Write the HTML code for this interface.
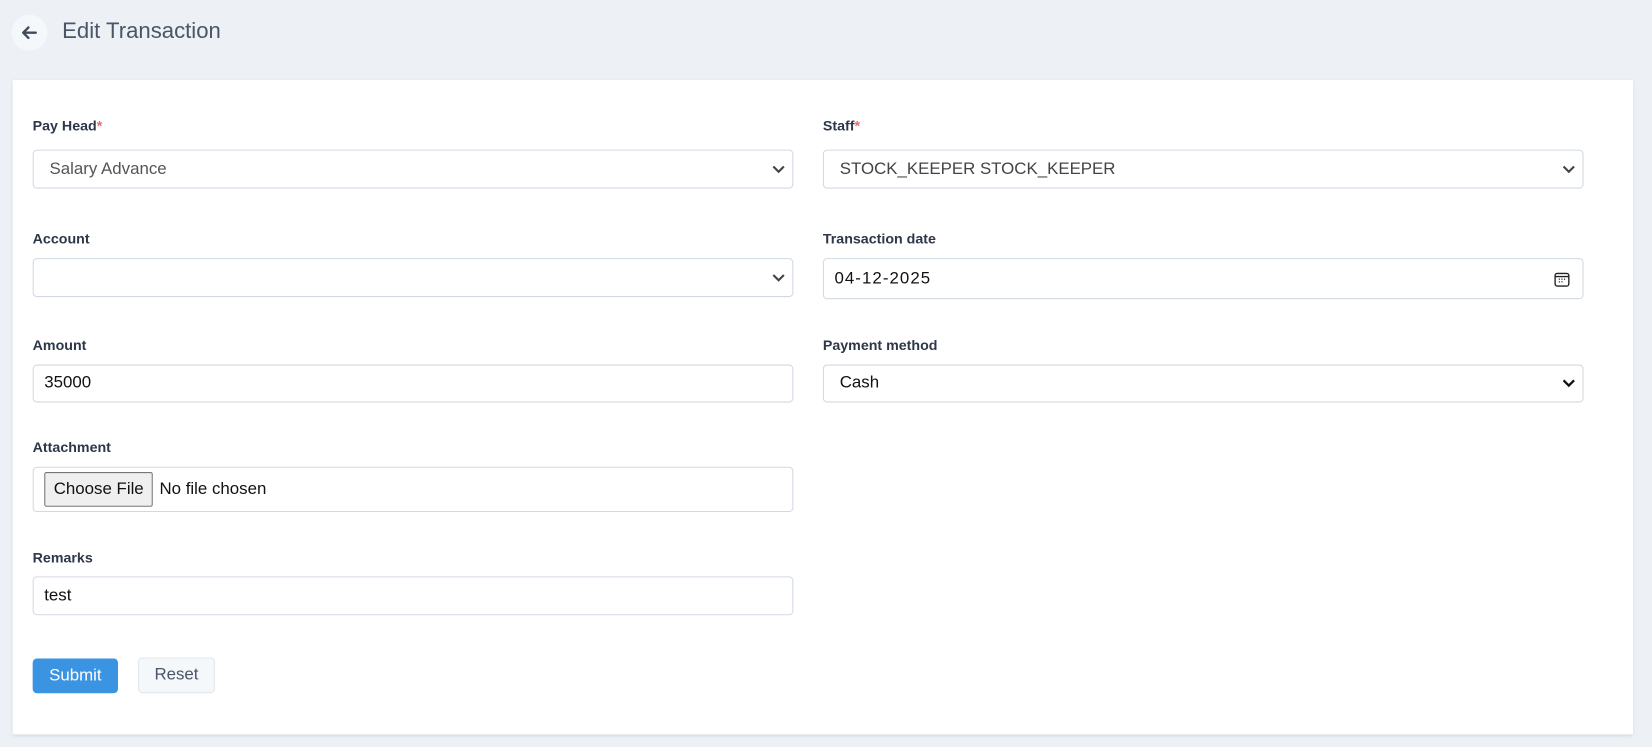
<!DOCTYPE html>
<html><head><meta charset="utf-8"><style>
*{box-sizing:border-box;margin:0;padding:0}
body{width:1652px;height:747px;background:#edf1f6;font-family:"Liberation Sans",sans-serif;position:relative;overflow:hidden}
#w{position:absolute;left:0;top:0;width:1568px;height:709px;transform:scale(1.0536);transform-origin:0 0}
.a{position:absolute}
.card{left:12px;top:76px;width:1538px;height:621px;background:#fff;box-shadow:0 1px 3px rgba(0,0,0,.12)}
.lbl{font-size:13.5px;font-weight:bold;color:#2d3748}
.lbl span{color:#f56565}
.f{border:1px solid #d2d9e3;border-radius:4px;background:#fff;font-size:16px;color:#111;padding-left:10px;display:flex;align-items:center}
.chev{position:absolute;right:6px;top:50%;margin-top:-5px}
</style></head><body><div id="w">
<div class="a" style="left:11px;top:14px;width:34px;height:34px;border-radius:50%;background:#f5f8fb"></div>
<svg class="a" style="left:19px;top:22px" width="18" height="18" viewBox="0 0 18 18"><path d="M15 9H3M8 4L3 9l5 5" stroke="#3f4a5a" stroke-width="2.2" fill="none" stroke-linecap="round" stroke-linejoin="round"/></svg>
<div class="a" style="left:59px;top:18px;font-size:21px;color:#4a5568">Edit Transaction</div>
<div class="a card"></div>

<div class="a lbl" style="left:31px;top:112px">Pay Head<span>*</span></div>
<div class="a f" style="left:31px;top:142px;width:722px;height:37px;color:#555;padding-left:15px">Salary Advance<svg class="chev" width="14" height="10"><path d="M2 2l5 5 5-5" stroke="#444" stroke-width="2" fill="none"/></svg></div>
<div class="a lbl" style="left:781px;top:112px">Staff<span>*</span></div>
<div class="a f" style="left:781px;top:142px;width:722px;height:37px;color:#444;padding-left:15px">STOCK_KEEPER STOCK_KEEPER<svg class="chev" width="14" height="10"><path d="M2 2l5 5 5-5" stroke="#444" stroke-width="2" fill="none"/></svg></div>

<div class="a lbl" style="left:31px;top:219px">Account</div>
<div class="a f" style="left:31px;top:245px;width:722px;height:37px"><svg class="chev" width="14" height="10"><path d="M2 2l5 5 5-5" stroke="#444" stroke-width="2" fill="none"/></svg></div>
<div class="a lbl" style="left:781px;top:219px">Transaction date</div>
<div class="a f" style="left:781px;top:245px;width:722px;height:39px;letter-spacing:1px">04-12-2025<svg class="a" style="right:12px;top:12px" width="15" height="15" viewBox="0 0 15 15"><rect x="1" y="1.5" width="13" height="12" rx="2" stroke="#222" stroke-width="1.3" fill="none"/><path d="M1 4.5h13" stroke="#222" stroke-width="1.3"/><path d="M4.5 7h1M7 7h1M9.5 7h1M4.5 9.5h1M7 9.5h1" stroke="#222" stroke-width="1.3"/></svg></div>

<div class="a lbl" style="left:31px;top:320px">Amount</div>
<div class="a f" style="left:31px;top:346px;width:722px;height:36px">35000</div>
<div class="a lbl" style="left:781px;top:320px">Payment method</div>
<div class="a f" style="left:781px;top:346px;width:722px;height:36px;padding-left:15px">Cash<svg class="chev" width="14" height="10"><path d="M2 2l5 5 5-5" stroke="#111" stroke-width="2.2" fill="none"/></svg></div>

<div class="a lbl" style="left:31px;top:417px">Attachment</div>
<div class="a f" style="left:31px;top:443px;width:722px;height:43px">
<div style="border:1px solid #777;background:#efefef;border-radius:2px;padding:0 8px;height:33px;line-height:31px;font-size:16px">Choose File</div><span style="margin-left:6px">No file chosen</span></div>

<div class="a lbl" style="left:31px;top:522px">Remarks</div>
<div class="a f" style="left:31px;top:547px;width:722px;height:37px">test</div>

<div class="a" style="left:31px;top:625px;width:81px;height:33px;background:#3b94e2;border-radius:4px;color:#fff;font-size:16px;text-align:center;line-height:33px">Submit</div>
<div class="a" style="left:131px;top:624px;width:73px;height:34px;background:#f5f8fb;border:1px solid #e1e6ec;border-radius:4px;color:#4a5568;font-size:16px;text-align:center;line-height:32px">Reset</div>
</div></body></html>
